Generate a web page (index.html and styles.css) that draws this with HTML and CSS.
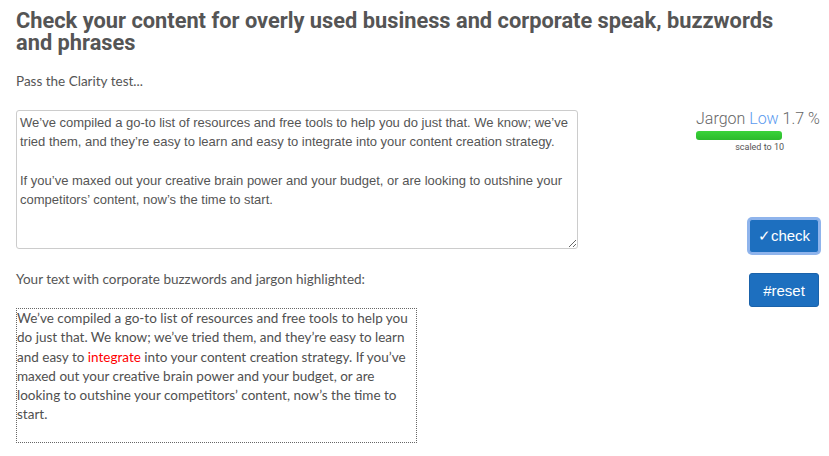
FILE: index.html
```html
<!DOCTYPE html>
<html>
<head>
<meta charset="utf-8">
<link rel="stylesheet" href="styles.css">
</head>
<body>
<div class="page">
  <h1 class="title">Check your content for overly used business and corporate speak, buzzwords and phrases</h1>
  <p class="intro">Pass the Clarity test...</p>
  <div class="layout">
    <div class="left">
      <textarea class="input">We’ve compiled a go-to list of resources and free tools to help you do just that. We know; we’ve tried them, and they’re easy to learn and easy to integrate into your content creation strategy.

If you’ve maxed out your creative brain power and your budget, or are looking to outshine your competitors’ content, now’s the time to start.</textarea>
      <p class="label">Your text with corporate buzzwords and jargon highlighted:</p>
      <div class="output">We’ve compiled a go-to list of resources and free tools to help you do just that. We know; we’ve tried them, and they’re easy to learn and easy to <span class="hl">integrate</span> into your content creation strategy. If you’ve maxed out your creative brain power and your budget, or are looking to outshine your competitors’ content, now’s the time to start.</div>
    </div>
    <div class="right">
      <div class="meter">
        <div class="score">Jargon <span class="level">Low</span> 1.7 %</div>
        <div class="bar"><div class="fill"></div></div>
        <div class="scaled">scaled to 10</div>
      </div>
      <div class="buttons">
        <button class="btn btn-focus">✓check</button>
        <button class="btn">#reset</button>
      </div>
    </div>
  </div>
</div>
</body>
</html>
```
FILE: styles.css
```css
html, body {
  margin: 0;
  padding: 0;
  background: #fff;
}
.page {
  padding: 10px 10px 0 16px;
  font-family: "Lato", sans-serif;
  color: #555;
}
.title {
  font-family: "Roboto", sans-serif;
  font-weight: 700;
  font-size: 21.8px;
  line-height: 22px;
  margin: 0;
  color: #555;
  width: 775px;
}
.intro {
  font-size: 13.5px;
  margin: 17px 0 0 0;
  line-height: 20px;
}
.layout {
  display: flex;
  justify-content: space-between;
  margin-top: 19px;
}
.left {
  width: 562px;
}
.input {
  display: block;
  box-sizing: border-box;
  width: 562px;
  height: 139px;
  border: 1px solid #ccc;
  border-radius: 3px;
  padding: 2px 3px;
  font-family: "Liberation Sans", Arial, sans-serif;
  font-size: 13px;
  line-height: 19.3px;
  color: #555;
  margin: 0;
  resize: vertical;
}
.label {
  font-size: 13.5px;
  margin: 20px 0 0 0;
  line-height: 20px;
}
.output {
  box-sizing: border-box;
  width: 401px;
  height: 135px;
  margin-top: 19px;
  border: 1px dotted #666;
  font-size: 13.5px;
  line-height: 19.3px;
  padding: 0;
  color: #505050;
}
.hl {
  color: #f00;
}
.right {
  display: flex;
  flex-direction: column;
  align-items: flex-end;
  width: 130px;
}
.meter {
  display: flex;
  flex-direction: column;
  align-items: flex-start;
  width: 125px;
  margin-right: -2px;
}
.score {
  font-family: "Roboto", sans-serif;
  font-weight: 300;
  font-size: 16px;
  line-height: 18px;
  color: #666;
  white-space: nowrap;
}
.level {
  color: #5b9bef;
}
.bar {
  margin-top: 3px;
  width: 86px;
  height: 9px;
  border-radius: 3px;
  background: #32c532;
  overflow: hidden;
}
.fill {
  height: 100%;
  width: 100%;
  background: linear-gradient(#3ad33a, #2cba2c);
}
.scaled {
  font-family: "Roboto", sans-serif;
  font-size: 9px;
  color: #555;
  margin-top: 2px;
  width: 88px;
  text-align: right;
}
.buttons {
  display: flex;
  flex-direction: column;
  gap: 20px;
  margin-top: 67px;
}
.btn {
  width: 70px;
  height: 34px;
  box-sizing: border-box;
  background: #1d6fbf;
  color: #fff;
  border: 1px solid #1a62aa;
  border-radius: 3px;
  font-family: "Liberation Sans", Arial, sans-serif;
  font-size: 15px;
  padding: 0;
}
.btn-focus {
  box-shadow: 0 0 0 2px #8fb4ec;
  border-color: #8fb4ec;
}
```
